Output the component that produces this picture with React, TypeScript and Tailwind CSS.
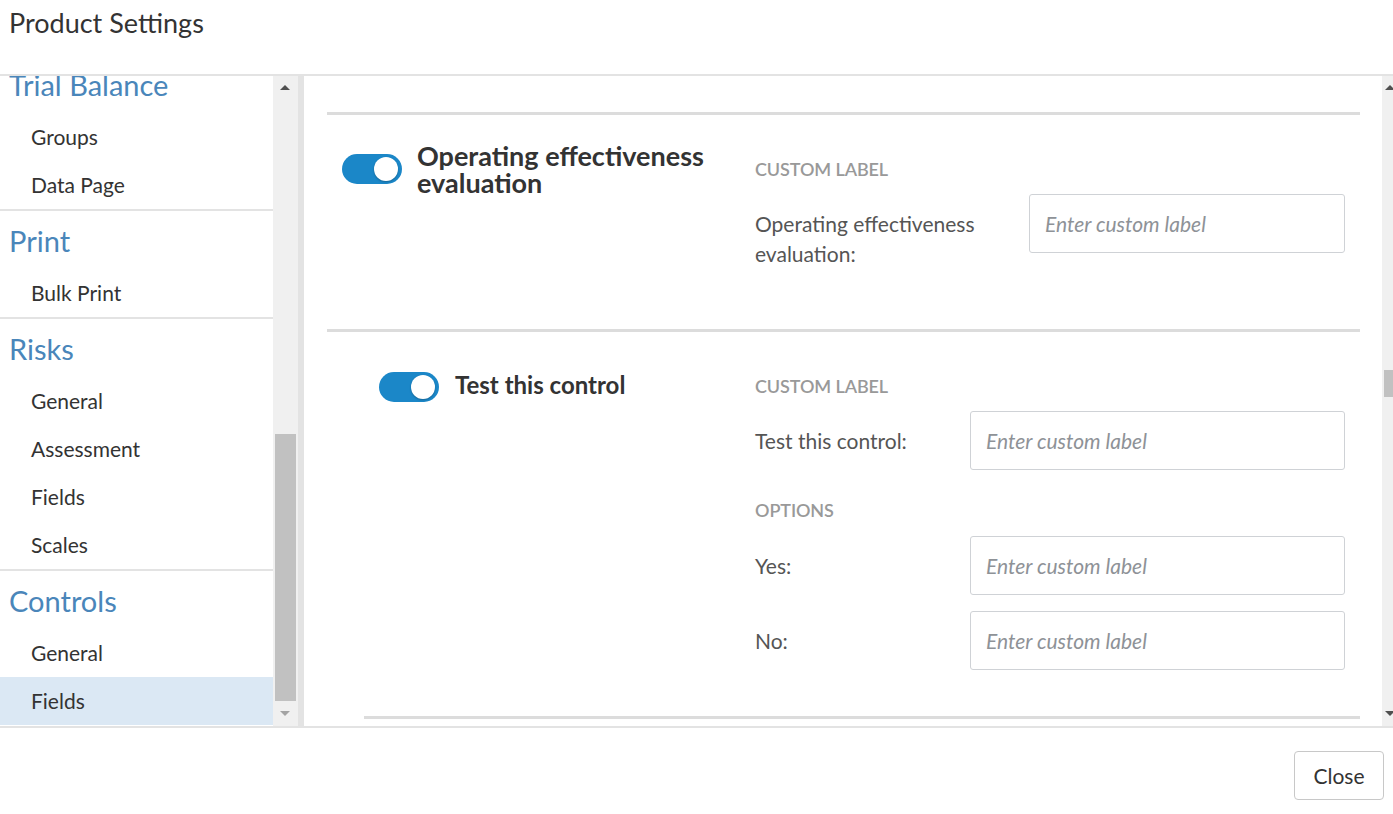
import React from "react";

const sections = [
    { title: "Trial Balance", items: ["Groups", "Data Page"] },
    { title: "Print", items: ["Bulk Print"] },
    { title: "Risks", items: ["General", "Assessment", "Fields", "Scales"] },
    { title: "Controls", items: ["General", "Fields"] },
];

const Toggle = () => (
    <div className="relative w-[60px] h-[30px] shrink-0 rounded-full bg-[#1b87c8]">
        <div className="absolute right-[4px] top-[3px] w-[24px] h-[24px] rounded-full bg-white shadow-[0_1px_2px_rgba(0,0,0,0.25)]" />
    </div>
);

const TextInput = () => (
    <input
        type="text"
        placeholder="Enter custom label"
        className="flex-1 h-[59px] px-[15px] rounded-[3px] border border-[#cfd2d6] bg-white text-[21px] text-[#333] placeholder:text-[#8e9297] placeholder:italic outline-none"
    />
);

const FieldRow = ({ label, labelWidth }: { label: string; labelWidth: string }) => (
    <div className="flex items-start">
        <div className={`${labelWidth} shrink-0 pt-[15px] pr-[16px] text-[21px] leading-[30px] text-[#555]`}>{label}</div>
        <TextInput />
    </div>
);

const SmallHeading = ({ children }: { children: React.ReactNode }) => (
    <div className="text-[18px] leading-[20px] font-semibold text-[#999] tracking-[-0.1px]">{children}</div>
);

const Sidebar = () => (
    <div className="w-[273px] shrink-0 overflow-hidden">
        <div className="-mt-[21px]">
            {sections.map((section, i) => (
                <div key={section.title} className={i > 0 ? "border-t-2 border-[#e3e3e3]" : ""}>
                    <div className="h-[58px] flex items-center pl-[9px] pt-[1px] text-[29px] text-[#4a86ba]">{section.title}</div>
                    {section.items.map((item, j) => {
                        const active = section.title === "Controls" && item === "Fields";
                        return (
                            <div
                                key={item + j}
                                className={`h-[48px] flex items-center pl-[31px] text-[21px] text-[#333] ${active ? "bg-[#dbe8f4]" : ""}`}
                            >
                                {item}
                            </div>
                        );
                    })}
                </div>
            ))}
        </div>
    </div>
);

const App = () => {
    return (
        <div className="h-[814px] w-full flex flex-col bg-white overflow-hidden" style={{ fontFamily: "Lato, 'Open Sans', sans-serif" }}>
            {/* header */}
            <div className="h-[76px] shrink-0 border-b-2 border-[#e3e3e3] pl-[9px] pt-[6px]">
                <h1 className="text-[27px] leading-[34px] text-[#333]">Product Settings</h1>
            </div>

            {/* body */}
            <div className="flex flex-1 min-h-0">
                <Sidebar />

                {/* sidebar scrollbar */}
                <div className="w-[25px] shrink-0 bg-[#f0f0f0] relative">
                    <div className="absolute left-[7px] top-[9px] w-0 h-0 border-l-[5px] border-r-[5px] border-b-[5px] border-l-transparent border-r-transparent border-b-[#505050]" />
                    <div className="absolute left-[2px] right-[2px] top-[358px] h-[267px] bg-[#c1c1c1]" />
                    <div className="absolute left-[7px] bottom-[10px] w-0 h-0 border-l-[5px] border-r-[5px] border-t-[5px] border-l-transparent border-r-transparent border-t-[#a3a3a3]" />
                </div>
                <div className="w-[6px] shrink-0 bg-[#e3e3e3]" />

                {/* main */}
                <div className="flex-1 min-w-0 overflow-hidden pl-[23px] pr-[22px] pt-[36px]">
                    {/* section 1 */}
                    <div className="border-t-[3px] border-[#dcdcdc] flex pr-[15px] pb-[60px]">
                        <div className="w-[428px] shrink-0 pl-[15px] pt-[27px]">
                            <div className="flex items-center gap-[15px]">
                                <Toggle />
                                <div className="text-[27px] leading-[27px] font-bold text-[#333]">
                                    Operating effectiveness
                                    <br />
                                    evaluation
                                </div>
                            </div>
                        </div>
                        <div className="flex-1 pt-[44px] flex flex-col gap-[15px]">
                            <SmallHeading>CUSTOM LABEL</SmallHeading>
                            <FieldRow label="Operating effectiveness evaluation:" labelWidth="w-[274px]" />
                        </div>
                    </div>

                    {/* section 2 */}
                    <div className="border-t-[3px] border-[#dcdcdc]">
                        <div className="flex pl-[37px] pr-[15px] pb-[46px]">
                            <div className="w-[391px] shrink-0 pl-[15px] pt-[39px]">
                                <div className="flex items-center gap-[16px]">
                                    <Toggle />
                                    <div className="pb-[4px] text-[24px] leading-[27px] font-bold text-[#333]">Test this control</div>
                                </div>
                            </div>
                            <div className="flex-1 pt-[44px] flex flex-col">
                                <SmallHeading>CUSTOM LABEL</SmallHeading>
                                <div className="mt-[15px]">
                                    <FieldRow label="Test this control:" labelWidth="w-[215px]" />
                                </div>
                                <div className="mt-[30px]">
                                    <SmallHeading>OPTIONS</SmallHeading>
                                </div>
                                <div className="mt-[16px] flex flex-col gap-[16px]">
                                    <FieldRow label="Yes:" labelWidth="w-[215px]" />
                                    <FieldRow label="No:" labelWidth="w-[215px]" />
                                </div>
                            </div>
                        </div>
                        <div className="ml-[37px] border-t-[3px] border-[#dcdcdc] h-[20px]" />
                    </div>
                </div>

                {/* main scrollbar */}
                <div className="w-[11px] shrink-0 bg-[#f0f0f0] relative overflow-hidden">
                    <div className="absolute left-[3px] top-[9px] w-0 h-0 border-l-[5px] border-r-[5px] border-b-[5px] border-l-transparent border-r-transparent border-b-[#505050]" />
                    <div className="absolute left-[2px] w-[15px] top-[294px] h-[27px] bg-[#c1c1c1]" />
                    <div className="absolute left-[3px] bottom-[10px] w-0 h-0 border-l-[5px] border-r-[5px] border-t-[5px] border-l-transparent border-r-transparent border-t-[#505050]" />
                </div>
            </div>

            {/* footer */}
            <div className="h-[88px] shrink-0 border-t-2 border-[#e3e3e3] flex justify-end items-start pt-[23px] pr-[9px]">
                <button className="w-[90px] h-[49px] rounded-[4px] border border-[#c8c8c8] bg-white text-[21px] text-[#333]">Close</button>
            </div>
        </div>
    );
};

export default App;
